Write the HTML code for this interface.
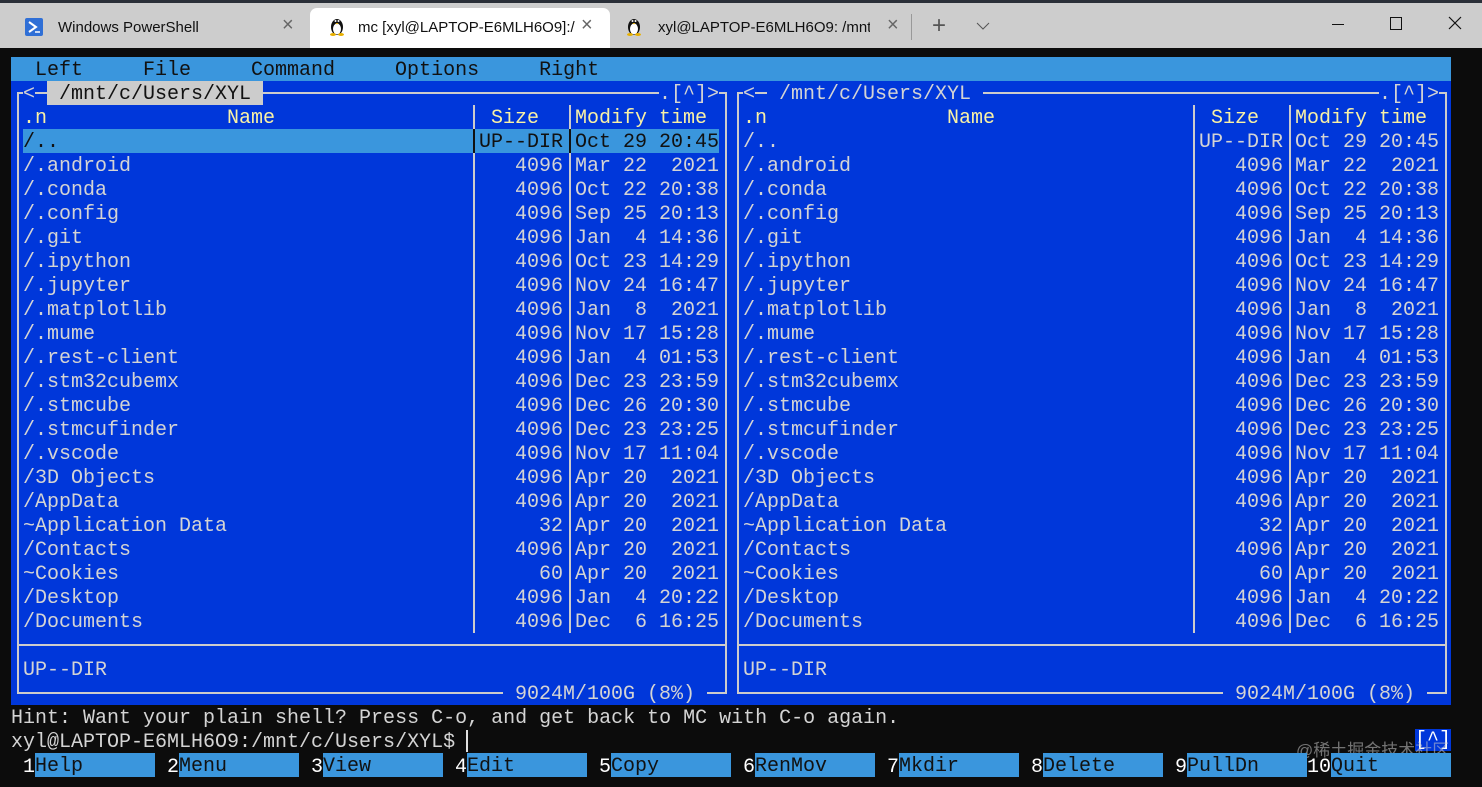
<!DOCTYPE html>
<html><head><meta charset="utf-8"><style>
*{margin:0;padding:0;box-sizing:border-box}
body{width:1482px;height:787px;background:#0c0c0c;position:relative;overflow:hidden;font-family:"Liberation Mono",monospace;font-size:20px;color:#d4d4d4}
.tb{position:absolute;left:0;top:0;width:1482px;height:48px;background:#cdcdcd;border-top:3px solid #2a2f38}
.tab{position:absolute;font-family:"Liberation Sans",sans-serif;font-size:15px;color:#111;top:19px;white-space:nowrap}
.x{position:absolute;top:14px;font-family:"Liberation Sans",sans-serif;font-size:20px;color:#666}
.blue{position:absolute;left:11px;top:57px;width:1440px;height:648px;background:#0037da}
.menu{position:absolute;left:11px;top:57px;width:1440px;height:24px;background:#3a96dd;color:#111}
.t{position:absolute;height:24px;line-height:24px;white-space:pre;padding-top:3px;line-height:21px}
.hl{position:absolute;background:#cccccc}
.vl{position:absolute;width:2px;background:#cccccc}
.r{position:absolute;left:0;width:1482px;height:24px}
.r span{position:absolute;top:3px;line-height:21px;white-space:pre}
.n{left:23px}.s{left:479px;width:84px;text-align:right}.d{left:575px}
.n2{left:743px}.s2{left:1199px;width:84px;text-align:right}.d2{left:1295px}
.y{color:#f9f1a5}
.fk{position:absolute;top:753px;height:24px;line-height:24px;white-space:pre}
.fk b{font-weight:normal;color:#fff;position:relative;top:2px}
.fk i{font-style:normal;background:#3a96dd;color:#111;display:inline-block;width:120px;height:24px;padding-top:3px;line-height:21px;vertical-align:top}
.fk b{vertical-align:top;display:inline-block;padding-top:1px}
</style></head><body>
<div class="tb"></div>
<div style="position:absolute;left:310px;top:8px;width:300px;height:40px;background:#fff;border-radius:7px 7px 0 0"></div>
<svg style="position:absolute;left:25px;top:18px" width="18" height="18"><rect width="18" height="18" rx="2" fill="#2f6fd6"/><path d="M4 4l7 5-7 5" stroke="#fff" stroke-width="2" fill="none"/><path d="M10 14h5" stroke="#fff" stroke-width="1.5"/></svg>
<div class="tab" style="left:58px">Windows PowerShell</div><div class="x" style="left:282px">×</div>
<svg style="position:absolute;left:329px;top:16px" width="16" height="20" viewBox="0 0 16 20"><ellipse cx="8" cy="11" rx="6" ry="8" fill="#111"/><ellipse cx="8" cy="13" rx="4" ry="5.5" fill="#fff"/><circle cx="6.5" cy="5" r="1" fill="#fff"/><circle cx="9.5" cy="5" r="1" fill="#fff"/><path d="M6.5 7h3l-1.5 1.5z" fill="#e8b000"/><ellipse cx="4" cy="18.5" rx="3" ry="1.5" fill="#e8b000"/><ellipse cx="12" cy="18.5" rx="3" ry="1.5" fill="#e8b000"/></svg>
<div class="tab" style="left:358px">mc [xyl@LAPTOP-E6MLH6O9]:/</div><div class="x" style="left:581px">×</div>
<svg style="position:absolute;left:626px;top:16px" width="16" height="20" viewBox="0 0 16 20"><ellipse cx="8" cy="11" rx="6" ry="8" fill="#111"/><ellipse cx="8" cy="13" rx="4" ry="5.5" fill="#fff"/><circle cx="6.5" cy="5" r="1" fill="#fff"/><circle cx="9.5" cy="5" r="1" fill="#fff"/><path d="M6.5 7h3l-1.5 1.5z" fill="#e8b000"/><ellipse cx="4" cy="18.5" rx="3" ry="1.5" fill="#e8b000"/><ellipse cx="12" cy="18.5" rx="3" ry="1.5" fill="#e8b000"/></svg>
<div class="tab" style="left:658px;width:212px;overflow:hidden">xyl@LAPTOP-E6MLH6O9: /mnt/c</div><div class="x" style="left:887px">×</div>
<div style="position:absolute;left:911px;top:14px;width:1px;height:26px;background:#999"></div>
<div class="x" style="left:932px;font-size:24px;top:12px;color:#555">+</div>
<svg style="position:absolute;left:976px;top:22px" width="14" height="9"><path d="M1 1l6 6 6-6" stroke="#555" fill="none"/></svg>
<div style="position:absolute;left:1332px;top:24px;width:12px;height:1px;background:#111"></div>
<div style="position:absolute;left:1390px;top:17px;width:12px;height:13px;border:1px solid #111"></div>
<svg style="position:absolute;left:1448px;top:16px" width="14" height="14"><path d="M1 1l12 12M13 1L1 13" stroke="#111" stroke-width="1.2"/></svg>

<div class="blue"></div>
<div class="menu"></div>
<div class="t" style="left:35px;top:57px;color:#111">Left     File     Command     Options     Right</div>

<div class="hl" style="left:17px;top:92px;width:710px;height:2px"></div>
<div class="hl" style="left:737px;top:92px;width:710px;height:2px"></div>
<div class="hl" style="left:17px;top:644px;width:710px;height:2px"></div>
<div class="hl" style="left:737px;top:644px;width:710px;height:2px"></div>
<div class="hl" style="left:17px;top:692px;width:710px;height:2px"></div>
<div class="hl" style="left:737px;top:692px;width:710px;height:2px"></div>
<div class="vl" style="left:17px;top:92px;height:602px"></div>
<div class="vl" style="left:725px;top:92px;height:602px"></div>
<div class="vl" style="left:737px;top:92px;height:602px"></div>
<div class="vl" style="left:1445px;top:92px;height:602px"></div>
<div class="vl" style="left:473px;top:105px;height:528px"></div>
<div class="vl" style="left:569px;top:105px;height:528px"></div>
<div class="vl" style="left:1193px;top:105px;height:528px"></div>
<div class="vl" style="left:1289px;top:105px;height:528px"></div>

<div class="t" style="left:23px;top:81px;background:#0037da">&lt;</div>
<div class="t" style="left:47px;top:81px;background:#cccccc;color:#111"> /mnt/c/Users/XYL </div>
<div class="t" style="left:659px;top:81px;background:#0037da">.[^]&gt;</div>
<div class="t" style="left:743px;top:81px;background:#0037da">&lt;</div>
<div class="t" style="left:767px;top:81px;background:#0037da"> /mnt/c/Users/XYL </div>
<div class="t" style="left:1379px;top:81px;background:#0037da">.[^]&gt;</div>
<div class="t" style="left:503px;top:681px;background:#0037da"> 9024M/100G (8%) </div>
<div class="t" style="left:1223px;top:681px;background:#0037da"> 9024M/100G (8%) </div>

<div class="r y" style="top:105px"><span style="left:23px">.n</span><span style="left:227px">Name</span><span style="left:491px">Size</span><span class="d">Modify time</span><span style="left:743px">.n</span><span style="left:947px">Name</span><span style="left:1211px">Size</span><span class="d2">Modify time</span></div>

<div style="position:absolute;left:23px;top:129px;width:696px;height:24px;background:#3a96dd"></div>
<div style="position:absolute;left:473px;top:129px;width:2px;height:24px;background:#111"></div>
<div style="position:absolute;left:569px;top:129px;width:2px;height:24px;background:#111"></div>
<div class="r" style="top:129px"><span class="n" style="color:#111">/..</span><span class="s" style="color:#111">UP--DIR</span><span class="d" style="color:#111">Oct 29 20:45</span><span class="n2">/..</span><span class="s2">UP--DIR</span><span class="d2">Oct 29 20:45</span></div>
<div class="r" style="top:153px"><span class="n">/.android</span><span class="s">4096</span><span class="d">Mar 22  2021</span><span class="n2">/.android</span><span class="s2">4096</span><span class="d2">Mar 22  2021</span></div>
<div class="r" style="top:177px"><span class="n">/.conda</span><span class="s">4096</span><span class="d">Oct 22 20:38</span><span class="n2">/.conda</span><span class="s2">4096</span><span class="d2">Oct 22 20:38</span></div>
<div class="r" style="top:201px"><span class="n">/.config</span><span class="s">4096</span><span class="d">Sep 25 20:13</span><span class="n2">/.config</span><span class="s2">4096</span><span class="d2">Sep 25 20:13</span></div>
<div class="r" style="top:225px"><span class="n">/.git</span><span class="s">4096</span><span class="d">Jan  4 14:36</span><span class="n2">/.git</span><span class="s2">4096</span><span class="d2">Jan  4 14:36</span></div>
<div class="r" style="top:249px"><span class="n">/.ipython</span><span class="s">4096</span><span class="d">Oct 23 14:29</span><span class="n2">/.ipython</span><span class="s2">4096</span><span class="d2">Oct 23 14:29</span></div>
<div class="r" style="top:273px"><span class="n">/.jupyter</span><span class="s">4096</span><span class="d">Nov 24 16:47</span><span class="n2">/.jupyter</span><span class="s2">4096</span><span class="d2">Nov 24 16:47</span></div>
<div class="r" style="top:297px"><span class="n">/.matplotlib</span><span class="s">4096</span><span class="d">Jan  8  2021</span><span class="n2">/.matplotlib</span><span class="s2">4096</span><span class="d2">Jan  8  2021</span></div>
<div class="r" style="top:321px"><span class="n">/.mume</span><span class="s">4096</span><span class="d">Nov 17 15:28</span><span class="n2">/.mume</span><span class="s2">4096</span><span class="d2">Nov 17 15:28</span></div>
<div class="r" style="top:345px"><span class="n">/.rest-client</span><span class="s">4096</span><span class="d">Jan  4 01:53</span><span class="n2">/.rest-client</span><span class="s2">4096</span><span class="d2">Jan  4 01:53</span></div>
<div class="r" style="top:369px"><span class="n">/.stm32cubemx</span><span class="s">4096</span><span class="d">Dec 23 23:59</span><span class="n2">/.stm32cubemx</span><span class="s2">4096</span><span class="d2">Dec 23 23:59</span></div>
<div class="r" style="top:393px"><span class="n">/.stmcube</span><span class="s">4096</span><span class="d">Dec 26 20:30</span><span class="n2">/.stmcube</span><span class="s2">4096</span><span class="d2">Dec 26 20:30</span></div>
<div class="r" style="top:417px"><span class="n">/.stmcufinder</span><span class="s">4096</span><span class="d">Dec 23 23:25</span><span class="n2">/.stmcufinder</span><span class="s2">4096</span><span class="d2">Dec 23 23:25</span></div>
<div class="r" style="top:441px"><span class="n">/.vscode</span><span class="s">4096</span><span class="d">Nov 17 11:04</span><span class="n2">/.vscode</span><span class="s2">4096</span><span class="d2">Nov 17 11:04</span></div>
<div class="r" style="top:465px"><span class="n">/3D Objects</span><span class="s">4096</span><span class="d">Apr 20  2021</span><span class="n2">/3D Objects</span><span class="s2">4096</span><span class="d2">Apr 20  2021</span></div>
<div class="r" style="top:489px"><span class="n">/AppData</span><span class="s">4096</span><span class="d">Apr 20  2021</span><span class="n2">/AppData</span><span class="s2">4096</span><span class="d2">Apr 20  2021</span></div>
<div class="r" style="top:513px"><span class="n">~Application Data</span><span class="s">32</span><span class="d">Apr 20  2021</span><span class="n2">~Application Data</span><span class="s2">32</span><span class="d2">Apr 20  2021</span></div>
<div class="r" style="top:537px"><span class="n">/Contacts</span><span class="s">4096</span><span class="d">Apr 20  2021</span><span class="n2">/Contacts</span><span class="s2">4096</span><span class="d2">Apr 20  2021</span></div>
<div class="r" style="top:561px"><span class="n">~Cookies</span><span class="s">60</span><span class="d">Apr 20  2021</span><span class="n2">~Cookies</span><span class="s2">60</span><span class="d2">Apr 20  2021</span></div>
<div class="r" style="top:585px"><span class="n">/Desktop</span><span class="s">4096</span><span class="d">Jan  4 20:22</span><span class="n2">/Desktop</span><span class="s2">4096</span><span class="d2">Jan  4 20:22</span></div>
<div class="r" style="top:609px"><span class="n">/Documents</span><span class="s">4096</span><span class="d">Dec  6 16:25</span><span class="n2">/Documents</span><span class="s2">4096</span><span class="d2">Dec  6 16:25</span></div>
<div class="r" style="top:657px"><span class="n">UP--DIR</span><span class="n2">UP--DIR</span></div>

<div class="t" style="left:11px;top:705px">Hint: Want your plain shell? Press C-o, and get back to MC with C-o again.</div>
<div class="t" style="left:11px;top:729px">xyl@LAPTOP-E6MLH6O9:/mnt/c/Users/XYL$ </div>
<div style="position:absolute;left:466px;top:730px;width:2px;height:22px;background:#e0e0e0"></div>
<div class="t" style="left:1415px;top:729px;background:#0037da;color:#fff;height:22px;padding-top:1px">[^]</div>
<div style="position:absolute;left:1296px;top:741px;font-family:'Liberation Sans','Noto Sans CJK SC',sans-serif;font-size:17px;line-height:20px;color:rgba(200,200,200,0.55)">@稀土掘金技术社区</div>

<div class="fk" style="left:23px"><b>1</b><i>Help</i></div>
<div class="fk" style="left:167px"><b>2</b><i>Menu</i></div>
<div class="fk" style="left:311px"><b>3</b><i>View</i></div>
<div class="fk" style="left:455px"><b>4</b><i>Edit</i></div>
<div class="fk" style="left:599px"><b>5</b><i>Copy</i></div>
<div class="fk" style="left:743px"><b>6</b><i>RenMov</i></div>
<div class="fk" style="left:887px"><b>7</b><i>Mkdir</i></div>
<div class="fk" style="left:1031px"><b>8</b><i>Delete</i></div>
<div class="fk" style="left:1175px"><b>9</b><i>PullDn</i></div>
<div class="fk" style="left:1307px"><b>10</b><i style="width:120px">Quit</i></div>
</body></html>
